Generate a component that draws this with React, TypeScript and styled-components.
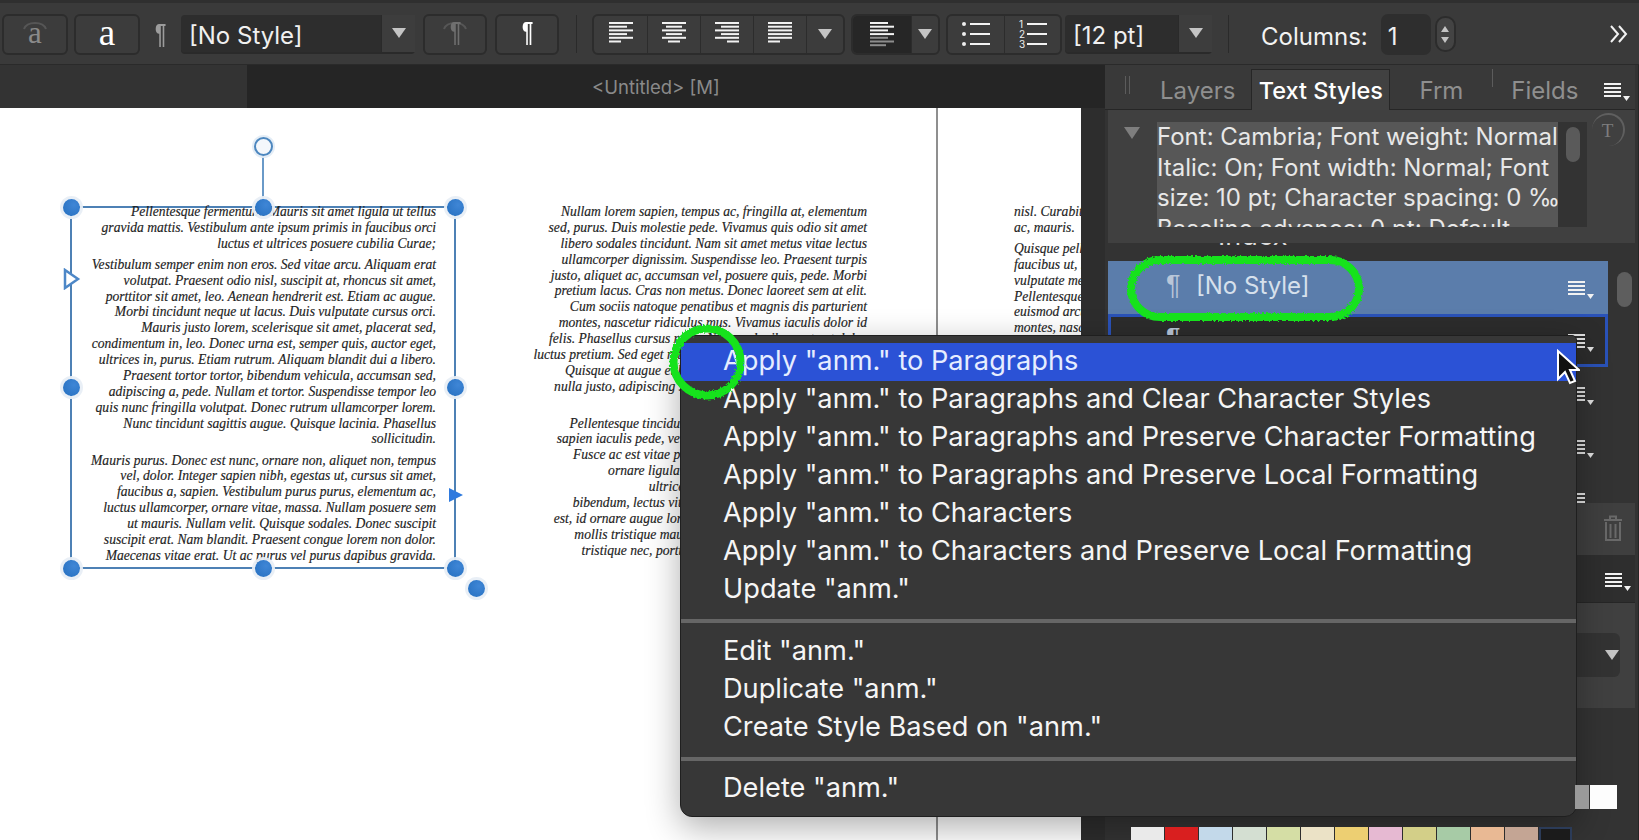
import { createGlobalStyle, styled } from 'styled-components';

const GlobalStyle = createGlobalStyle`
  html, body {
    margin: 0;
    padding: 0;
    background: #333;
  }
  * {
    box-sizing: border-box;
  }
`;

const uiFont = `Inter, "Liberation Sans", sans-serif`;

const Page = styled.div`
  position: relative;
  width: 1639px;
  height: 840px;
  overflow: hidden;
  display: flex;
  flex-direction: column;
  font-family: ${uiFont};
  color: #fff;
`;

/* ---------- top toolbar ---------- */

const Toolbar = styled.div`
  height: 65px;
  flex: none;
  display: flex;
  align-items: center;
  padding: 4px 0 3px 2px;
  background: #3a3a3a;
  border-top: 3px solid #2f2f2f;
  border-bottom: 1px solid #2a2a2a;
`;

const ToolButton = styled.div<{ $w: number; $ml?: number }>`
  position: relative;
  width: ${(p) => p.$w}px;
  height: 41px;
  margin-left: ${(p) => p.$ml ?? 0}px;
  flex: none;
  display: flex;
  align-items: center;
  justify-content: center;
  background: #3c3c3c;
  border: 2px solid #2c2c2c;
  border-radius: 6px;
  font-family: "Liberation Serif", serif;
  font-size: 37px;
  line-height: 1;
  padding-bottom: 4px;
`;

const Ghost = styled.span`
  color: #8a8a8a;
  font-size: 31px;
`;

const Arc = styled.svg`
  position: absolute;
  left: 50%;
  top: 2px;
  margin-left: -13px;
`;

const PilcrowLabel = styled.div<{ $tone?: 'bright' | 'dim' }>`
  width: 41px;
  flex: none;
  text-align: center;
  font-family: "Liberation Sans", sans-serif;
  font-weight: 700;
  font-size: 28px;
  transform: scaleX(0.72);
  color: ${(p) => (p.$tone === 'bright' ? '#fff' : p.$tone === 'dim' ? '#6f6f6f' : '#9c9c9c')};
`;

const Select = styled.div<{ $w: number; $ml?: number }>`
  width: ${(p) => p.$w}px;
  height: 39px;
  margin-left: ${(p) => p.$ml ?? 0}px;
  flex: none;
  display: flex;
  align-items: stretch;
  background: #2d2d2d;
  border-radius: 4px;
  border-bottom: 2px solid #2a2a2a;
  font-size: 24px;
  color: #f0f0f0;
`;

const SelectText = styled.div`
  flex: 1;
  padding: 4px 0 0 8px;
  display: flex;
  align-items: center;
  white-space: nowrap;
`;

const SelectArrow = styled.div`
  width: 34px;
  flex: none;
  display: flex;
  align-items: center;
  justify-content: center;
  background: #3d3d3d;
  border-left: 1px solid #2a2a2a;
`;

const Triangle = styled.div<{ $size?: number; $up?: boolean; $color?: string }>`
  width: 0;
  height: 0;
  border-left: ${(p) => p.$size ?? 7}px solid transparent;
  border-right: ${(p) => p.$size ?? 7}px solid transparent;
  ${(p) => (p.$up ? 'border-bottom' : 'border-top')}: ${(p) => (p.$size ?? 7) * 1.5}px solid ${(p) => p.$color ?? '#c4c4c4'};
`;

const Divider = styled.div<{ $ml: number }>`
  width: 1px;
  height: 38px;
  flex: none;
  margin-left: ${(p) => p.$ml}px;
  background: #2a2a2a;
`;

const ButtonGroup = styled.div<{ $ml: number }>`
  display: flex;
  height: 41px;
  flex: none;
  margin-left: ${(p) => p.$ml}px;
  border: 2px solid #2c2c2c;
  border-radius: 6px;
  overflow: hidden;
  background: #3c3c3c;
`;

const Segment = styled.div<{ $w: number; $dark?: boolean }>`
  width: ${(p) => p.$w}px;
  flex: none;
  display: flex;
  align-items: center;
  justify-content: center;
  background: ${(p) => (p.$dark ? '#262626' : 'transparent')};
  &:not(:first-child) {
    border-left: 1px solid #2c2c2c;
  }
`;

const ColumnsLabel = styled.div`
  margin-left: 32px;
  padding-top: 4px;
  flex: none;
  font-size: 24px;
  color: #f2f2f2;
`;

const NumberBox = styled.div`
  width: 50px;
  height: 41px;
  margin-left: 13px;
  flex: none;
  padding: 4px 0 0 7px;
  display: flex;
  align-items: center;
  background: #2e2e2e;
  border-radius: 7px;
  font-size: 24px;
  color: #f0f0f0;
`;

const Stepper = styled.div`
  width: 21px;
  height: 36px;
  margin-left: 4px;
  flex: none;
  display: flex;
  flex-direction: column;
  align-items: center;
  justify-content: center;
  gap: 5px;
  background: #434343;
  border: 2px solid #2c2c2c;
  border-radius: 10px;
`;

const Overflow = styled.svg`
  margin-left: 153px;
  flex: none;
`;

/* ---------- main area ---------- */

const Body = styled.div`
  flex: 1;
  display: flex;
  min-height: 0;
`;

const Workspace = styled.div`
  width: 1105px;
  flex: none;
  display: flex;
  flex-direction: column;
  background: #2d2d2d;
`;

const DocTabs = styled.div`
  height: 43px;
  flex: none;
  display: flex;
  background: #252525;
`;

const DocTabLeft = styled.div`
  width: 247px;
  background: #333;
`;

const DocTitle = styled.div`
  padding: 1px 0 0 345px;
  display: flex;
  align-items: center;
  font-size: 18.5px;
  color: #8a8a8a;
`;

const Canvas = styled.div`
  width: 1081px;
  flex: 1;
  display: flex;
  overflow: hidden;
  background: #fff;
  font-family: "Liberation Serif", serif;
  font-style: italic;
  font-size: 13.6px;
  line-height: 15.87px;
  color: #222;
  -webkit-text-stroke: 0.15px #222;
`;

const Frame = styled.div`
  position: relative;
  width: 384px;
  height: 361px;
  flex: none;
  margin: 99px 0 0 71px;
  padding-right: 19px;
  box-shadow: 0 0 0 1px #4d81b5, inset 0 0 0 1px #4d81b5;
  text-align: right;
`;

const FrameText = styled.div`
  transform: translateY(-3px);
`;

const Column = styled.div<{ $right?: boolean; $w: number; $ml?: number }>`
  width: ${(p) => p.$w}px;
  flex: none;
  margin: 96px 0 0 ${(p) => p.$ml ?? 0}px;
  text-align: ${(p) => (p.$right ? 'right' : 'left')};
`;

const Para = styled.div<{ $gap: number }>`
  &:not(:first-child) {
    margin-top: ${(p) => p.$gap}px;
  }
`;

const Line = styled.span`
  display: block;
  white-space: nowrap;
`;

const PageBreak = styled.div`
  width: 2px;
  flex: none;
  margin-left: 69px;
  background: #8f8f8f;
`;

const Handle = styled.div<{ $x: string; $y: string }>`
  position: absolute;
  left: ${(p) => p.$x};
  top: ${(p) => p.$y};
  width: 17px;
  height: 17px;
  margin: -8.5px 0 0 -8.5px;
  border-radius: 50%;
  background: radial-gradient(circle at 65% 35%, #3f86d6, #256fbf);
  box-shadow: 0 0 0 3px rgba(232, 238, 245, 0.95);
`;

const RotateStem = styled.div`
  position: absolute;
  left: calc(50% - 1px);
  top: -60px;
  width: 2px;
  height: 60px;
  background: #6a9ac8;
`;

const RotateHandle = styled.div`
  position: absolute;
  left: 50%;
  top: -70px;
  width: 19px;
  height: 19px;
  margin-left: -9.5px;
  border-radius: 50%;
  background: #f4f7fb;
  border: 2px solid #4d87bf;
  box-shadow: 0 0 0 2px rgba(225, 235, 245, 0.9);
`;

const PortMark = styled.svg<{ $x: string; $y: string }>`
  position: absolute;
  left: ${(p) => p.$x};
  top: ${(p) => p.$y};
`;

/* ---------- right panel ---------- */

const Panel = styled.div`
  flex: 1;
  display: flex;
  flex-direction: column;
  background: #333;
  padding-right: 3px;
  border-right: 1px solid #262626;
`;

const TabRow = styled.div`
  position: relative;
  height: 45px;
  flex: none;
  display: flex;
  align-items: flex-end;
  background: #393939;
  border-bottom: 1px solid #262626;
  font-size: 24px;
`;

const Grip = styled.div`
  position: absolute;
  left: 20px;
  top: 11px;
  width: 5px;
  height: 18px;
  border-left: 1px solid #5c5c5c;
  border-right: 1px solid #5c5c5c;
`;

const Tab = styled.div<{ $ml: number; $active?: boolean; $w?: number }>`
  width: ${(p) => (p.$w ? `${p.$w}px` : 'auto')};
  height: 41px;
  margin-left: ${(p) => p.$ml}px;
  margin-bottom: ${(p) => (p.$active ? '-1px' : '0')};
  padding-top: ${(p) => (p.$active ? 0 : 3)}px;
  display: flex;
  align-items: center;
  justify-content: center;
  background: ${(p) => (p.$active ? '#414141' : 'transparent')};
  border: ${(p) => (p.$active ? '1px solid #262626' : '0')};
  border-bottom: 0;
  color: ${(p) => (p.$active ? '#fff' : '#8f8f8f')};
  font-size: ${(p) => (p.$active ? 23.5 : 24)}px;
  font-weight: ${(p) => (p.$active ? 500 : 400)};
`;

const TabTick = styled.div`
  width: 1px;
  height: 18px;
  margin: 0 0 22px 29px;
  background: #5c5c5c;
`;

const PanelMenu = styled.div`
  position: absolute;
  right: 5px;
  top: 14px;
`;

const Preview = styled.div`
  position: relative;
  height: 133px;
  flex: none;
  margin-left: 3px;
  background: #404040;
`;

const PreviewArrow = styled.div`
  position: absolute;
  left: 16px;
  top: 17px;
`;

const PreviewText = styled.div`
  position: absolute;
  left: 49px;
  top: 12px;
  width: 401px;
  height: 105px;
  overflow: hidden;
  background: #575757;
  font-size: 24px;
  line-height: 30.5px;
  color: #e8e8e8;
  white-space: nowrap;
`;

const PreviewTrack = styled.div`
  position: absolute;
  left: 450px;
  top: 12px;
  width: 29px;
  height: 105px;
  padding: 5px 0 0 8px;
  background: #333;
`;

const PreviewThumb = styled.div`
  width: 14px;
  height: 35px;
  border-radius: 7px;
  background: #5a5a5a;
`;

const StyleIcon = styled.div`
  position: absolute;
  right: 10px;
  top: 3px;
  width: 33px;
  height: 33px;
  display: flex;
  align-items: center;
  justify-content: center;
  border-radius: 50%;
  border-top: 2px solid #5f5f5f;
  border-right: 2px solid #5f5f5f;
  font-family: "Liberation Serif", serif;
  font-size: 19px;
  color: #7d7d7d;
`;

const StyleList = styled.div`
  position: relative;
  height: 260px;
  flex: none;
  padding-left: 3px;
  overflow: hidden;
`;

const ClippedRow = styled.div`
  height: 18px;
  margin-top: -16px;
  padding-left: 110px;
  display: flex;
  align-items: flex-end;
  font-size: 27px;
  line-height: 18px;
  color: #ddd;
`;

const ListSpacer = styled.div`
  height: 16px;
`;

const StyleRow = styled.div<{ $selected?: boolean; $outlined?: boolean }>`
  position: relative;
  width: 500px;
  height: 53px;
  display: flex;
  align-items: center;
  padding-left: ${(p) => (p.$outlined ? 55 : 58)}px;
  padding-bottom: 5px;
  background: ${(p) => (p.$selected ? '#5b7dab' : p.$outlined ? '#2c2c2c' : 'transparent')};
  border: ${(p) => (p.$outlined ? '3px solid #2a52b8' : '0')};
  font-size: 24px;
  color: #d6e0ec;
`;

const RowPilcrow = styled.span`
  width: 30px;
  font-family: "Liberation Sans", sans-serif;
  font-size: 27px;
  color: #b9c6d8;
`;

const RowMenu = styled.div<{ $outlined?: boolean }>`
  position: absolute;
  right: ${(p) => (p.$outlined ? 11 : 14)}px;
  top: ${(p) => (p.$outlined ? 13 : 16)}px;
`;

const ListThumb = styled.div`
  position: absolute;
  left: 512px;
  top: 29px;
  width: 15px;
  height: 35px;
  border-radius: 8px;
  background: #5e5e5e;
`;

const TrashBar = styled.div`
  height: 52px;
  flex: none;
  margin-left: 3px;
  padding: 12px 12px 0 0;
  display: flex;
  justify-content: flex-end;
  background: #3f3f3f;
`;

const SwatchHeader = styled.div`
  height: 48px;
  flex: none;
  padding: 17px 4px 0 0;
  display: flex;
  justify-content: flex-end;
  background: #2e2e2e;
  border-bottom: 1px solid #262626;
`;

const SwatchControls = styled.div`
  height: 105px;
  flex: none;
  padding: 30px 15px 0 0;
  display: flex;
  justify-content: flex-end;
  background: #404040;
`;

const SwatchSelect = styled.div`
  width: 80px;
  height: 44px;
  padding-right: 1px;
  display: flex;
  align-items: center;
  justify-content: flex-end;
  background: #333;
  border-radius: 6px;
`;

const SwatchArea = styled.div`
  flex: 1;
  display: flex;
  flex-direction: column;
  padding: 77px 0 0 26px;
  gap: 18px;
`;

/* sits above the menu's drop shadow, the palette stays bright in the screenshot */
const SwatchRow = styled.div<{ $justify?: string }>`
  position: relative;
  z-index: 1;
  display: flex;
  gap: 1px;
  justify-content: ${(p) => p.$justify ?? 'flex-start'};
`;

const Swatch = styled.div<{ $color: string; $w?: number; $h?: number; $selected?: boolean }>`
  width: ${(p) => p.$w ?? 33}px;
  height: ${(p) => p.$h ?? 24}px;
  flex: none;
  background: ${(p) => p.$color};
  border: ${(p) => (p.$selected ? '2px solid #2b3b58' : '0')};
`;

/* ---------- context menu ---------- */

const ContextMenu = styled.div`
  position: absolute;
  left: 680px;
  top: 335px;
  width: 897px;
  height: 482px;
  padding-top: 7px;
  background: #373737;
  border: 1px solid #1f1f1f;
  border-radius: 5px 5px 12px 12px;
  box-shadow: 0 10px 34px rgba(0, 0, 0, 0.32);
  font-size: 27.2px;
  color: #f5f5f5;
`;

const MenuItem = styled.div<{ $active?: boolean }>`
  height: 38px;
  padding: 0 0 3px 42px;
  display: flex;
  align-items: center;
  white-space: nowrap;
  background: ${(p) => (p.$active ? '#2b52d6' : 'transparent')};
  color: ${(p) => (p.$active ? '#e6edff' : '#f5f5f5')};
`;

const MenuSeparator = styled.div`
  height: 4px;
  margin: 10px 0;
  background: #666;
`;

const LastSeparator = styled(MenuSeparator)`
  margin-bottom: 9px;
`;

const Cursor = styled.svg`
  position: absolute;
  left: 1556px;
  top: 349px;
`;

const Scribble = styled.svg`
  position: absolute;
  left: 0;
  top: 0;
  z-index: 2;
  pointer-events: none;
`;

/* ---------- small drawings ---------- */

const AlignIcon = ({ widths, align, fade }: { widths: number[]; align: 'left' | 'center' | 'right'; fade?: boolean }) => (
  <svg width="26" height="26" viewBox="0 0 26 26">
    {widths.map((w, i) => {
      const x = align === 'left' ? 1 : align === 'center' ? 13 - w / 2 : 25 - w;
      return <rect key={i} x={x} y={1 + i * 3.7} width={w} height="2" fill={fade && i > 3 ? '#8d8d8d' : '#f2f2f2'} />;
    })}
  </svg>
);

const BulletIcon = () => (
  <svg width="30" height="26" viewBox="0 0 30 26">
    {[3, 13, 23].map((y) => (
      <g key={y}>
        <circle cx="3" cy={y} r="2" fill="#eee" />
        <rect x="9" y={y - 1} width="20" height="2" fill="#f2f2f2" />
      </g>
    ))}
  </svg>
);

const NumberIcon = () => (
  <svg width="30" height="28" viewBox="0 0 30 28" fontFamily="Inter, sans-serif" fontSize="10" fill="#eee">
    <text x="1" y="8">1</text>
    <text x="1" y="18">2</text>
    <text x="1" y="28">3</text>
    <rect x="9" y="3" width="20" height="2" fill="#f2f2f2" />
    <rect x="9" y="13" width="20" height="2" fill="#f2f2f2" />
    <rect x="9" y="23" width="20" height="2" fill="#f2f2f2" />
  </svg>
);

const MenuIcon = ({ color = '#f2f2f2' }: { color?: string }) => (
  <svg width="26" height="20" viewBox="0 0 26 20">
    {[1, 5, 9, 13].map((y) => (
      <rect key={y} x="0" y={y} width="17" height="2" fill={color} />
    ))}
    <path d="M19 14h7l-3.5 5z" fill={color} />
  </svg>
);

const TrashIcon = () => (
  <svg width="20" height="27" viewBox="0 0 20 27" fill="none" stroke="#696969" strokeWidth="2">
    <path d="M1 5h18M7 4V1.5h6V4M3 7v18h14V7M7.5 9v14M12.5 9v14" />
  </svg>
);

const styleRows = [true, false, false, false, false];

const col1 = [
  [
    'Pellentesque fermentum. Mauris sit amet ligula ut tellus',
    'gravida mattis. Vestibulum ante ipsum primis in faucibus orci',
    'luctus et ultrices posuere cubilia Curae;',
  ],
  [
    'Vestibulum semper enim non eros. Sed vitae arcu. Aliquam erat',
    'volutpat. Praesent odio nisl, suscipit at, rhoncus sit amet,',
    'porttitor sit amet, leo. Aenean hendrerit est. Etiam ac augue.',
    'Morbi tincidunt neque ut lacus. Duis vulputate cursus orci.',
    'Mauris justo lorem, scelerisque sit amet, placerat sed,',
    'condimentum in, leo. Donec urna est, semper quis, auctor eget,',
    'ultrices in, purus. Etiam rutrum. Aliquam blandit dui a libero.',
    'Praesent tortor tortor, bibendum vehicula, accumsan sed,',
    'adipiscing a, pede. Nullam et tortor. Suspendisse tempor leo',
    'quis nunc fringilla volutpat. Donec rutrum ullamcorper lorem.',
    'Nunc tincidunt sagittis augue. Quisque lacinia. Phasellus',
    'sollicitudin.',
  ],
  [
    'Mauris purus. Donec est nunc, ornare non, aliquet non, tempus',
    'vel, dolor. Integer sapien nibh, egestas ut, cursus sit amet,',
    'faucibus a, sapien. Vestibulum purus purus, elementum ac,',
    'luctus ullamcorper, ornare vitae, massa. Nullam posuere sem',
    'ut mauris. Nullam velit. Quisque sodales. Donec suscipit',
    'suscipit erat. Nam blandit. Praesent congue lorem non dolor.',
    'Maecenas vitae erat. Ut ac purus vel purus dapibus gravida.',
  ],
];

const col2 = [
  [
    'Nullam lorem sapien, tempus ac, fringilla at, elementum',
    'sed, purus. Duis molestie pede. Vivamus quis odio sit amet',
    'libero sodales tincidunt. Nam sit amet metus vitae lectus',
    'ullamcorper dignissim. Suspendisse leo. Praesent turpis',
    'justo, aliquet ac, accumsan vel, posuere quis, pede. Morbi',
    'pretium lacus. Cras non metus. Donec laoreet sem at elit.',
    'Cum sociis natoque penatibus et magnis dis parturient',
    'montes, nascetur ridiculus mus. Vivamus iaculis dolor id',
    'felis. Phasellus cursus nunc. Nullam dapibus ante ut dolor',
    'luctus pretium. Sed eget nibh vitae nisl dictum tempus ante at',
    'Quisque at augue et libero faucibus tincidunt. Donec at',
    'nulla justo, adipiscing sit amet, dapibus eu, posuere ac ut',
  ],
  [
    'Pellentesque tincidunt mauris nec lectus. Donec sed ut',
    'sapien iaculis pede, vel tempor nibh justo at lorem. Nunc',
    'Fusce ac est vitae purus varius mattis. Proin sed enim',
    'ornare ligula. Donec quis mi. Mauris eget justo',
    'ultrices in, sagittis vel, lobortis sed, elit.',
    'bibendum, lectus vitae tincidunt iaculis, ante lorem sit',
    'est, id ornare augue lorem nec nulla. Aenean vitae sapien',
    'mollis tristique mauris. Sed porta lacus non magna ut',
    'tristique nec, porttitor et, tortor. Cras vitae nulla mi.',
  ],
];

const col3 = [
  ['nisl. Curabitur at nibh', 'ac, mauris.'],
  [
    'Quisque pellentesque',
    'faucibus ut, mattis',
    'vulputate metus',
    'Pellentesque habitant',
    'euismod arcu nec',
    'montes, nascetur',
  ],
];

const menuTop = [
  'Apply "anm." to Paragraphs and Clear Character Styles',
  'Apply "anm." to Paragraphs and Preserve Character Formatting',
  'Apply "anm." to Paragraphs and Preserve Local Formatting',
  'Apply "anm." to Characters',
  'Apply "anm." to Characters and Preserve Local Formatting',
  'Update "anm."',
];

const swatches = ['#eaeaea', '#d91f1f', '#c3d9ea', '#d4dfd2', '#d5dea5', '#ebe2c6', '#edcf72', '#e6b9d2', '#d3cf88', '#a7cba6', '#e9b994', '#c4a594'];

const handles: [string, string][] = [
  ['0%', '0%'],
  ['50%', '0%'],
  ['100%', '0%'],
  ['0%', '50%'],
  ['100%', '50%'],
  ['0%', '100%'],
  ['50%', '100%'],
  ['100%', '100%'],
];

const renderParas = (paras: string[][], gap: number) =>
  paras.map((lines, i) => (
    <Para key={i} $gap={gap}>
      {lines.map((line) => (
        <Line key={line}>{line}</Line>
      ))}
    </Para>
  ));

const GhostArc = () => (
  <Arc width="26" height="12" viewBox="0 0 26 12" fill="none" stroke="#565656" strokeWidth="2">
    <path d="M2 11C5 3 21 3 24 11" />
  </Arc>
);

export default function App() {
  return (
    <Page>
      <GlobalStyle />
      <Toolbar>
        <ToolButton $w={66}>
          <GhostArc />
          <Ghost>a</Ghost>
        </ToolButton>
        <ToolButton $w={66} $ml={6}>a</ToolButton>
        <PilcrowLabel>¶</PilcrowLabel>
        <Select $w={234}>
          <SelectText>[No Style]</SelectText>
          <SelectArrow><Triangle /></SelectArrow>
        </Select>
        <ToolButton $w={64} $ml={8}>
          <GhostArc />
          <PilcrowLabel $tone="dim">¶</PilcrowLabel>
        </ToolButton>
        <ToolButton $w={64} $ml={8}>
          <PilcrowLabel $tone="bright">¶</PilcrowLabel>
        </ToolButton>
        <Divider $ml={17} />
        <ButtonGroup $ml={15}>
          <Segment $w={53}><AlignIcon align="left" widths={[24, 18, 24, 18, 24, 12]} /></Segment>
          <Segment $w={53}><AlignIcon align="center" widths={[24, 16, 24, 16, 24, 12]} /></Segment>
          <Segment $w={53}><AlignIcon align="right" widths={[24, 18, 24, 18, 24, 12]} /></Segment>
          <Segment $w={53}><AlignIcon align="left" widths={[24, 24, 24, 24, 24, 12]} /></Segment>
          <Segment $w={37}><Triangle /></Segment>
        </ButtonGroup>
        <ButtonGroup $ml={6}>
          <Segment $w={58} $dark><AlignIcon align="left" fade widths={[18, 24, 18, 24, 18, 24, 16]} /></Segment>
          <Segment $w={27}><Triangle /></Segment>
        </ButtonGroup>
        <ButtonGroup $ml={6}>
          <Segment $w={56}><BulletIcon /></Segment>
          <Segment $w={56}><NumberIcon /></Segment>
        </ButtonGroup>
        <Select $w={147} $ml={3}>
          <SelectText>[12 pt]</SelectText>
          <SelectArrow><Triangle /></SelectArrow>
        </Select>
        <Divider $ml={16} />
        <ColumnsLabel>Columns:</ColumnsLabel>
        <NumberBox>1</NumberBox>
        <Stepper>
          <Triangle $up $size={4} />
          <Triangle $size={4} />
        </Stepper>
        <Overflow width="20" height="20" viewBox="0 0 20 20" fill="none" stroke="#f2f2f2" strokeWidth="2">
          <path d="M2 2l7 8-7 8M10 2l7 8-7 8" />
        </Overflow>
      </Toolbar>

      <Body>
        <Workspace>
          <DocTabs>
            <DocTabLeft />
            <DocTitle>&lt;Untitled&gt; [M]</DocTitle>
          </DocTabs>
          <Canvas>
            <Frame>
              <FrameText>{renderParas(col1, 5.2)}</FrameText>
              <RotateStem />
              <RotateHandle />
              {handles.map(([x, y]) => (
                <Handle key={x + y} $x={x} $y={y} />
              ))}
              <Handle $x="105.5%" $y="105.8%" />
              <PortMark $x="-8px" $y="61px" width="18" height="22" viewBox="0 0 18 22" fill="#fff" stroke="#4d87c7" strokeWidth="2.5">
                <path d="M2 2l13 9-13 9z" />
              </PortMark>
              <PortMark $x="calc(100% - 7px)" $y="279px" width="16" height="18" viewBox="0 0 16 18" fill="#2f7ade">
                <path d="M1 2l14 7-14 7z" />
              </PortMark>
            </Frame>
            <Column $right $w={412}>{renderParas(col2, 21)}</Column>
            <PageBreak />
            <Column $w={200} $ml={76}>{renderParas(col3, 5.2)}</Column>
          </Canvas>
        </Workspace>

        <Panel>
          <TabRow>
            <Grip />
            <Tab $ml={55}>Layers</Tab>
            <Tab $ml={16} $w={139} $active>Text Styles</Tab>
            <Tab $ml={29}>Frm</Tab>
            <TabTick />
            <Tab $ml={18}>Fields</Tab>
            <PanelMenu><MenuIcon /></PanelMenu>
          </TabRow>
          <Preview>
            <PreviewArrow><Triangle $size={8} $color="#7e7e7e" /></PreviewArrow>
            <PreviewText>
              <div>Font: Cambria; Font weight: Normal</div>
              <div>Italic: On; Font width: Normal; Font</div>
              <div>size: 10 pt; Character spacing: 0 ‰</div>
              <div>Baseline advance: 0 pt; Default</div>
            </PreviewText>
            <PreviewTrack><PreviewThumb /></PreviewTrack>
            <StyleIcon>T</StyleIcon>
          </Preview>
          <StyleList>
            <ClippedRow>Index</ClippedRow>
            <ListSpacer />
            {styleRows.map((selected, i) => (
              <StyleRow key={i} $selected={selected} $outlined={i === 1}>
                {i < 2 && <RowPilcrow>¶</RowPilcrow>}
                {selected && '[No Style]'}
                <RowMenu $outlined={i === 1}><MenuIcon color={i === 0 ? '#f2f2f2' : '#e0e0e0'} /></RowMenu>
              </StyleRow>
            ))}
            <ListThumb />
          </StyleList>
          <TrashBar><TrashIcon /></TrashBar>
          <SwatchHeader><MenuIcon /></SwatchHeader>
          <SwatchControls>
            <SwatchSelect><Triangle /></SwatchSelect>
          </SwatchControls>
          <SwatchArea>
            <SwatchRow $justify="flex-end">
              <Swatch $color="#9a9a9a" $w={14} />
              <Swatch $color="#fdfdfd" $w={27} />
              <Swatch $color="transparent" $w={17} />
            </SwatchRow>
            <SwatchRow>
              {swatches.map((c) => (
                <Swatch key={c} $color={c} />
              ))}
              <Swatch $color="#1b1b1b" $selected />
            </SwatchRow>
          </SwatchArea>
        </Panel>
      </Body>

      <ContextMenu>
        <MenuItem $active>Apply "anm." to Paragraphs</MenuItem>
        {menuTop.map((label) => (
          <MenuItem key={label}>{label}</MenuItem>
        ))}
        <MenuSeparator />
        <MenuItem>Edit "anm."</MenuItem>
        <MenuItem>Duplicate "anm."</MenuItem>
        <MenuItem>Create Style Based on "anm."</MenuItem>
        <LastSeparator />
        <MenuItem>Delete "anm."</MenuItem>
      </ContextMenu>

      <Cursor width="24" height="36" viewBox="0 0 24 36">
        <path d="M2 2v28l7-7 5 11 5-2-5-11h9z" fill="#111" stroke="#fff" strokeWidth="2" />
      </Cursor>

      <Scribble width="1639" height="840" viewBox="0 0 1639 840" fill="none" stroke="#12e21c" strokeWidth="8">
        <defs>
          <filter id="rough" x="-5%" y="-5%" width="110%" height="110%">
            <feTurbulence type="fractalNoise" baseFrequency="0.45" numOctaves="2" seed="4" />
            <feDisplacementMap in="SourceGraphic" scale="4" />
          </filter>
        </defs>
        <g filter="url(#rough)">
          <rect x="1131" y="260" width="228" height="57" rx="29" />
          <circle cx="707" cy="362" r="33.5" />
        </g>
      </Scribble>
    </Page>
  );
}
